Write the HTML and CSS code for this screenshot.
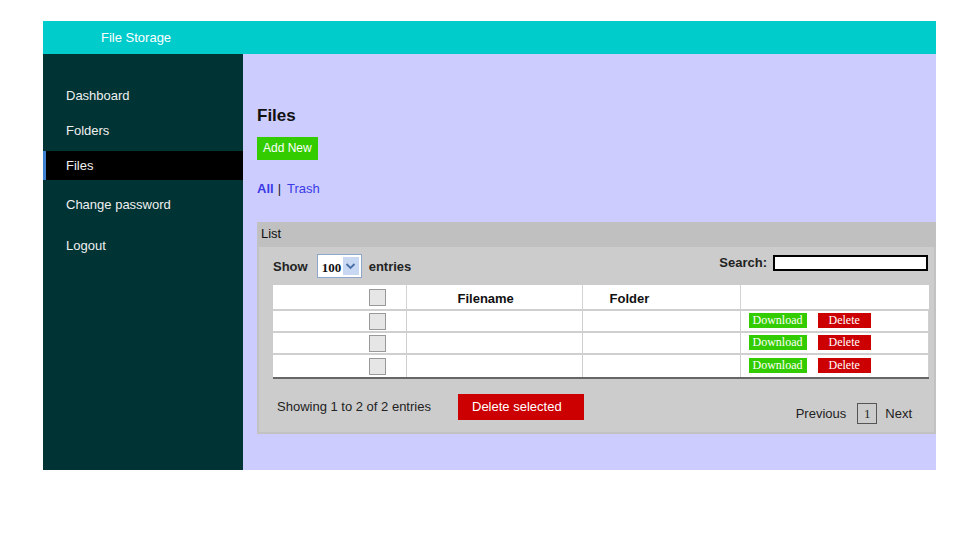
FILE: index.html
```html
<!DOCTYPE html>
<html>
<head>
<meta charset="utf-8">
<title>File Storage</title>
<link rel="stylesheet" href="styles.css">
</head>
<body>
<div class="app">
  <header class="topbar">File Storage</header>
  <div class="main">
    <nav class="sidebar">
      <a class="nav-item">Dashboard</a>
      <a class="nav-item gap-6">Folders</a>
      <a class="nav-item gap-6 active">Files</a>
      <a class="nav-item gap-10">Change password</a>
      <a class="nav-item gap-12">Logout</a>
    </nav>
    <section class="content">
      <h1 class="title">Files</h1>
      <a class="btn-add">Add New</a>
      <div class="filters"><a class="filter current">All</a><span class="sep">|</span><a class="filter">Trash</a></div>
      <div class="panel">
        <div class="panel-head">List</div>
        <div class="panel-body">
          <div class="toolbar">
            <div class="length">
              <span class="lbl">Show</span>
              <span class="select"><span class="select-val">100</span><span class="select-arrow"><svg width="11" height="8" viewBox="0 0 11 8"><path d="M1.5 2 L5.5 6 L9.5 2" fill="none" stroke="#4a6fa8" stroke-width="1.8"/></svg></span></span>
              <span class="lbl">entries</span>
            </div>
            <div class="search">
              <span class="lbl">Search:</span>
              <span class="search-input"></span>
            </div>
          </div>
          <table class="grid">
            <colgroup><col class="c1"><col class="c2"><col class="c3"><col class="c4"></colgroup>
            <thead>
              <tr><th class="chk-cell"><span class="chk"></span></th><th class="h-file">Filename</th><th class="h-folder">Folder</th><th></th></tr>
            </thead>
            <tbody>
              <tr><td class="chk-cell"><span class="chk"></span></td><td></td><td></td><td class="actions"><span class="b-dl">Download</span><span class="b-del">Delete</span></td></tr>
              <tr><td class="chk-cell"><span class="chk"></span></td><td></td><td></td><td class="actions"><span class="b-dl">Download</span><span class="b-del">Delete</span></td></tr>
              <tr class="last"><td class="chk-cell"><span class="chk"></span></td><td></td><td></td><td class="actions"><span class="b-dl">Download</span><span class="b-del">Delete</span></td></tr>
            </tbody>
          </table>
          <div class="footer">
            <div class="info">Showing 1 to 2 of 2 entries</div>
            <a class="btn-delsel">Delete selected</a>
            <div class="pager">
              <span class="pg-link">Previous</span>
              <span class="pg-num">1</span>
              <span class="pg-link">Next</span>
            </div>
          </div>
        </div>
      </div>
    </section>
  </div>
</div>
</body>
</html>
```

FILE: styles.css
```css
* { box-sizing: border-box; }
html, body { margin: 0; padding: 0; background: #fff; }
body { font-family: "Liberation Sans", Arial, sans-serif; font-size: 13px; color: #222; }

.app { margin: 21px 0 0 43px; width: 893px; }

.topbar {
  height: 33px;
  line-height: 33px;
  background: #00cccc;
  color: #fff;
  padding-left: 58px;
  font-size: 13px;
}

.main { display: flex; height: 416px; }

.sidebar {
  width: 200px;
  background: #003333;
  padding-top: 27px;
  display: flex;
  flex-direction: column;
}
.nav-item {
  display: block;
  height: 29px;
  line-height: 29px;
  padding-left: 23px;
  color: #f0f0f0;
  font-size: 13px;
}
.gap-6 { margin-top: 6px; }
.gap-10 { margin-top: 10px; }
.gap-12 { margin-top: 12px; }
.nav-item.active { background: #000; border-left: 3px solid #3f7fcf; padding-left: 20px; }

.content {
  flex: 1;
  background: #ccccff;
  padding: 52px 0 0 14px;
}
.title { margin: 0; font-size: 17px; line-height: 20px; font-weight: bold; color: #111; }
.btn-add {
  display: inline-block;
  margin-top: 11px;
  height: 23px;
  line-height: 23px;
  padding: 0 6px;
  background: #33cc00;
  color: #fff;
  font-size: 12px;
}
.filters { margin-top: 21px; line-height: 16px; font-size: 13px; }
.filter { color: #3a3ae6; }
.filter.current { font-weight: bold; }
.sep { margin: 0 6px 0 4px; color: #222; }

.panel { margin-top: 25px; width: 679px; }
.panel-head {
  height: 25px;
  line-height: 24px;
  background: #c0c0c0;
  padding-left: 4px;
  color: #111;
}
.panel-body {
  background: #cccccc;
  border: 2px solid #c2c2c2;
  border-top: 0;
  padding: 7px 6px 0 14px;
  height: 187px;
}

.toolbar { display: flex; justify-content: space-between; align-items: flex-start; height: 31px; }
.length { display: flex; align-items: center; height: 24px; }
.lbl { font-weight: bold; color: #222; }
.select {
  display: flex;
  width: 45px;
  height: 24px;
  margin: 0 7px 0 9px;
  border: 1px solid #8ea6cc;
  background: #fff;
  padding: 2px;
}
.select-val { flex: 1; font-family: "Liberation Serif", serif; font-weight: bold; font-size: 13px; line-height: 20px; padding-left: 2px; padding-top: 1px; color: #111; }
.select-arrow { width: 16px; background: #c9d8f2; display: flex; align-items: center; justify-content: center; }

.search { display: flex; align-items: center; height: 18px; margin-top: 0; }
.search .lbl { position: relative; top: -1px; }
.search-input { display: block; width: 155px; height: 16px; border: 2px solid #000; background: #fff; margin-left: 6px; }

.grid { border-collapse: collapse; width: 655px; background: #fff; table-layout: fixed; }
.c1 { width: 133px; } .c2 { width: 176px; } .c3 { width: 158px; } .c4 { width: 188px; }
.grid th { height: 25px; font-weight: bold; text-align: left; color: #111; border-left: 1px solid #d4d4d4; border-bottom: 1px solid #333; padding: 0; }
.grid th:first-child { border-left: 0; }
.grid .h-file { padding-left: 51px; padding-top: 2px; }
.grid .h-folder { padding-left: 27px; padding-top: 2px; }
.grid td { height: 22px; border: 1px solid #cfcfcf; border-top: 2px solid #cfcfcf; padding: 0; }
.grid td:first-child { border-left: 0; }
.grid tr.last td { border-bottom: 2px solid #666; height: 24px; }
.grid .chk-cell { text-align: right; padding-right: 20px; }
.chk { display: inline-block; width: 17px; height: 17px; border: 1px solid #999; background: #e6e6e6; vertical-align: middle; }
.grid .actions { padding-left: 8px; white-space: nowrap; }
.b-dl, .b-del { display: inline-block; height: 15px; line-height: 15px; font-family: "Liberation Serif", serif; font-size: 12px; color: #fff; vertical-align: middle; position: relative; top: -1px; }
.b-dl { background: #33cc00; padding: 0 4px; }
.b-del { background: #cc0000; padding: 0 11px; margin-left: 11px; }

.footer { display: flex; align-items: flex-start; margin-top: 15px; }
.info { padding-left: 4px; line-height: 26px; width: 185px; }
.btn-delsel {
  display: block;
  width: 126px;
  height: 26px;
  line-height: 26px;
  padding-left: 14px;
  background: #cc0000;
  color: #fff;
}
.pager { margin-left: auto; margin-right: 16px; margin-top: 9px; display: flex; align-items: center; }
.pg-link { color: #222; }
.pg-num {
  width: 20px; height: 21px; line-height: 19px;
  margin: 0 8px 0 11px;
  border: 1px solid #555;
  text-align: center;
  font-family: "Liberation Serif", serif;
  font-size: 13px;
}
```
